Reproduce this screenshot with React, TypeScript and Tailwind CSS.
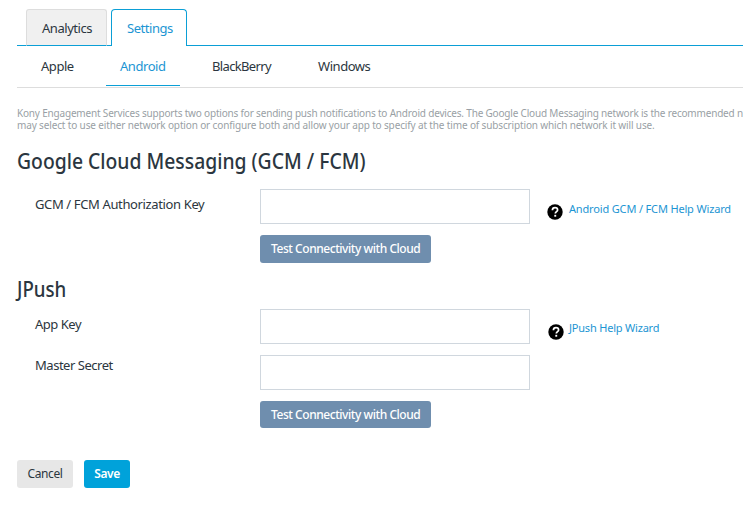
import React from "react";

function HelpIcon() {
  return (
    <svg width="16" height="16" viewBox="0 0 16 16" className="block shrink-0">
      <circle cx="8" cy="8" r="7.7" fill="#000" />
      <path d="M5.4 6.3C5.4 4.6 6.5 3.7 8 3.7s2.6.9 2.6 2.2c0 1.7-2.3 1.8-2.3 3.7" fill="none" stroke="#fff" strokeWidth="1.7" />
      <rect x="7.3" y="10.8" width="1.9" height="1.9" fill="#fff" />
    </svg>
  );
}

function TestButton({ className = "" }: { className?: string }) {
  return (
    <button className={`block w-[171px] rounded-[3px] bg-[#6f8eae] pl-[11px] text-left text-[12px] font-medium tracking-[-0.45px] text-white ${className}`}>
      Test Connectivity with Cloud
    </button>
  );
}

function Field({ label }: { label: string }) {
  return <input aria-label={label} className="block h-[35px] w-[270px] border border-[#d0d7de] bg-white" />;
}

export default function App() {
  return (
    <div className="h-[509px] w-[743px] overflow-hidden whitespace-nowrap bg-white pl-[17px] font-['Noto_Sans','Open_Sans',sans-serif] text-[13px] text-[#2b3640]">
      <nav className="flex h-[46px] pt-[9px] leading-[36px] tracking-[-0.45px]">
        <div className="w-[9px] border-b border-[#0b9fd6]" />
        <div className="w-[81px] rounded-t-[3px] border border-b-[#0b9fd6] border-[#dddddd] bg-[#f0f0f0] pl-[15px]">Analytics</div>
        <div className="w-[4px] border-b border-[#0b9fd6]" />
        <div className="w-[76px] rounded-t-[4px] border border-b-0 border-[#0b9fd6] pl-[15px] text-[#1c95d3]">Settings</div>
        <div className="flex-1 border-b border-[#0b9fd6]" />
      </nav>
      <nav className="flex h-[42px] border-b border-[#dddddd] leading-[41px] tracking-[-0.45px]">
        <div className="w-[89px] pl-[24px]">Apple</div>
        <div className="h-[40px] w-[74px] border-b border-[#0b9fd6] pl-[14px] text-[#1c95d3]">Android</div>
        <div className="w-[138px] pl-[32px] tracking-[-0.65px]">BlackBerry</div>
        <div>Windows</div>
      </nav>
      <p className="mt-[19px] h-[24px] text-[10px] leading-[12px] tracking-[-0.14px] text-[#999fa5]">
        <span className="tracking-[-0.185px]">Kony Engagement Services supports two options for sending push notifications to Android devices. The Google Cloud Messaging network is the recommended network</span>
        <br />
        may select to use either network option or configure both and allow your app to specify at the time of subscription which network it will use.
      </p>
      <h2 className="mt-[16px] h-[42px] origin-left scale-x-[0.921] text-[21px] font-medium leading-[28px]">Google Cloud Messaging (GCM / FCM)</h2>
      <section className="flex h-[89px]">
        <label className="w-[243px] pl-[18px] leading-[31px] tracking-[-0.37px]">GCM / FCM Authorization Key</label>
        <div>
          <Field label="GCM / FCM Authorization Key" />
          <TestButton className="mt-[11px] h-[28px]" />
        </div>
        <div className="ml-[17px] flex pt-[10px]">
          <div className="pt-[5px]"><HelpIcon /></div>
          <a className="ml-[6px] text-[11px] leading-[20px] tracking-[-0.16px] text-[#1c95d3]">Android GCM / FCM Help Wizard</a>
        </div>
      </section>
      <h2 className="h-[31px] origin-left scale-x-[0.89] text-[21px] font-medium leading-[22px]">JPush</h2>
      <section className="flex h-[151px]">
        <div className="w-[243px] pl-[18px] tracking-[-0.47px]">
          <label className="block h-[41px] leading-[31px]">App Key</label>
          <label className="block leading-[31px]">Master Secret</label>
        </div>
        <div>
          <Field label="App Key" />
          <div className="mt-[11px]"><Field label="Master Secret" /></div>
          <TestButton className="mt-[11px] h-[27px]" />
        </div>
        <div className="ml-[18px] flex pt-[10px]">
          <div className="pt-[5px]"><HelpIcon /></div>
          <a className="ml-[5px] text-[11px] leading-[18px] tracking-[-0.2px] text-[#1c95d3]">JPush Help Wizard</a>
        </div>
      </section>
      <div className="flex gap-[11px] text-[12px] tracking-[-0.4px]">
        <button className="h-[28px] w-[56px] rounded-[3px] bg-[#e7e7e7]">Cancel</button>
        <button className="h-[28px] w-[46px] rounded-[3px] bg-[#00a2da] font-semibold text-white">Save</button>
      </div>
    </div>
  );
}
